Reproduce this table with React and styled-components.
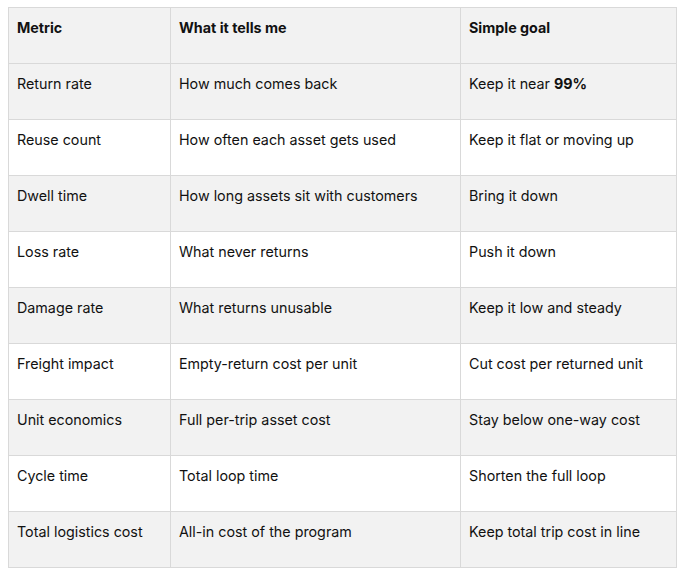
import React from "react";
import styled, { createGlobalStyle } from "styled-components";

const rows = [
  ["Return rate", "How much comes back", <>Keep it near <strong>99%</strong></>],
  ["Reuse count", "How often each asset gets used", "Keep it flat or moving up"],
  ["Dwell time", "How long assets sit with customers", "Bring it down"],
  ["Loss rate", "What never returns", "Push it down"],
  ["Damage rate", "What returns unusable", "Keep it low and steady"],
  ["Freight impact", "Empty-return cost per unit", "Cut cost per returned unit"],
  ["Unit economics", "Full per-trip asset cost", "Stay below one-way cost"],
  ["Cycle time", "Total loop time", "Shorten the full loop"],
  ["Total logistics cost", "All-in cost of the program", "Keep total trip cost in line"],
];

export default function App() {
  return (
    <>
      <GlobalStyle />
      <Page>
        <Table>
          <colgroup>
            <col style={{ width: 162 }} />
            <col style={{ width: 290 }} />
            <col />
          </colgroup>
          <thead>
            <Row $shaded>
              <HeadCell>Metric</HeadCell>
              <HeadCell>What it tells me</HeadCell>
              <HeadCell>Simple goal</HeadCell>
            </Row>
          </thead>
          <tbody>
            {rows.map((r, i) => (
              <Row key={i} $shaded={i % 2 === 0}>
                <Cell>{r[0]}</Cell>
                <Cell>{r[1]}</Cell>
                <Cell>{r[2]}</Cell>
              </Row>
            ))}
          </tbody>
        </Table>
      </Page>
    </>
  );
}

const GlobalStyle = createGlobalStyle`
  body {
    margin: 0;
    background: #fff;
    font-family: Inter, "Noto Sans", sans-serif;
    color: #111;
  }
`;

const Page = styled.div`
  padding: 7px 8px 0 8px;
`;

const Table = styled.table`
  width: 669px;
  border-collapse: collapse;
  table-layout: fixed;
  border: 1px solid #d9d9d9;
`;

const Row = styled.tr`
  height: 56px;
  background: ${(p) => (p.$shaded ? "#f2f2f2" : "#fff")};
`;

const HeadCell = styled.th`
  text-align: left;
  vertical-align: top;
  font-weight: 700;
  font-size: 14.3px;
  line-height: 20px;
  padding: 10px 8px 0 8px;
  border: 1px solid #d9d9d9;
`;

const Cell = styled.td`
  vertical-align: top;
  font-size: 14.3px;
  line-height: 20px;
  padding: 10px 8px 0 8px;
  border: 1px solid #d9d9d9;

  strong {
    font-weight: 700;
  }
`;
